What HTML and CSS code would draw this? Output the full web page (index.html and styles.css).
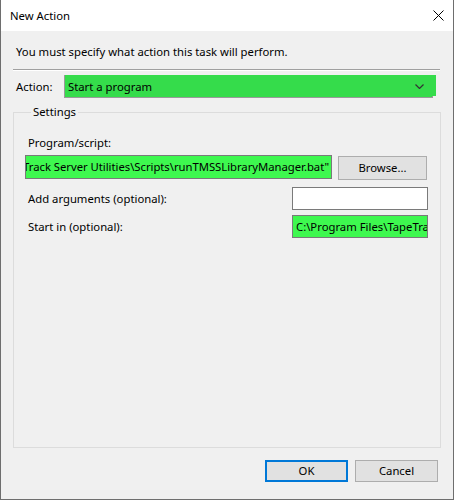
FILE: index.html
```html
<!DOCTYPE html>
<html>
<head>
<meta charset="utf-8">
<link rel="stylesheet" href="styles.css">
</head>
<body>
<div class="window">
  <div class="titlebar">
    <span class="title">New Action</span>
    <svg class="close" width="11" height="11" viewBox="0 0 11 11"><path d="M0.5 0.5 L10.5 10.5 M10.5 0.5 L0.5 10.5" stroke="#000" stroke-width="1" fill="none"/></svg>
  </div>
  <div class="content">
    <div class="intro">You must specify what action this task will perform.</div>
    <div class="separator"></div>
    <div class="action-row">
      <span class="action-label">Action:</span>
      <div class="combo">
        <span class="combo-text">Start a program</span>
        <svg class="chevron" width="9" height="5" viewBox="0 0 9 5"><path d="M0.5 0.5 L4.5 4.5 L8.5 0.5" stroke="#333" stroke-width="1.2" fill="none"/></svg>
      </div>
    </div>
    <fieldset class="settings">
      <legend>Settings</legend>
      <div class="label">Program/script:</div>
      <div class="program-row">
        <div class="field green wide"><span>Track Server Utilities\Scripts\runTMSSLibraryManager.bat"</span></div>
        <div class="button browse">Browse...</div>
      </div>
      <div class="opt-row first">
        <span class="label">Add arguments (optional):</span>
        <div class="field small"></div>
      </div>
      <div class="opt-row second">
        <span class="label">Start in (optional):</span>
        <div class="field small green left"><span>C:\Program Files\TapeTra</span></div>
      </div>
    </fieldset>
    <div class="buttons">
      <div class="button ok">OK</div>
      <div class="button">Cancel</div>
    </div>
  </div>
</div>
</body>
</html>
```

FILE: styles.css
```css
html, body {
  margin: 0;
  padding: 0;
  background: #f0f0f0;
}
body {
  font-family: "Noto Sans", "Open Sans", sans-serif;
  font-size: 11.3px;
  line-height: 16px;
  color: #000;
}
.window {
  width: 454px;
  height: 500px;
  box-sizing: border-box;
  border: 1px solid #6e6e6e;
  border-top: none;
  display: flex;
  flex-direction: column;
  background: #f0f0f0;
}
.titlebar {
  height: 31px;
  background: #fff;
  display: flex;
  align-items: center;
  padding-left: 9px;
  padding-right: 9px;
  flex: none;
}
.title {
  flex: 1;
  padding-top: 1px;
}
.close {
  display: block;
}
.content {
  flex: 1;
  display: flex;
  flex-direction: column;
  padding: 0 12px;
}
.intro {
  margin-top: 13px;
  padding-left: 3px;
}
.separator {
  margin-top: 9px;
  height: 1px;
  background: #a0a0a0;
  border-bottom: 1px solid #fff;
  margin-right: 1px;
}
.action-row {
  margin-top: 4px;
  display: flex;
  align-items: center;
  height: 23px;
}
.action-label {
  padding-left: 3px;
  width: 48px;
}
.combo {
  position: relative;
  width: 369px;
  height: 23px;
  box-sizing: border-box;
  border: 1px solid #9a9a9a;
  background: #35dc4b;
  display: flex;
  align-items: center;
  padding-left: 3px;
}
.combo::before {
  content: "";
  position: absolute;
  left: 0;
  top: -1px;
  right: -4px;
  bottom: 1px;
  background: #35dc4b;
}
.combo-text {
  position: relative;
  flex: 1;
}
.chevron {
  position: relative;
  display: block;
  margin-right: 8px;
  margin-bottom: 1px;
}
.settings {
  flex: 1;
  margin: 6px 0 0 0;
  border: 1px solid #dcdcdc;
  padding: 15px 12px 0 11px;
  min-width: 0;
}
.settings legend {
  padding: 0 2px;
  margin-left: 6px;
  line-height: 16px;
}
.label {
  padding-left: 3px;
}
.program-row {
  margin-top: 4px;
  display: flex;
  align-items: flex-start;
  justify-content: space-between;
}
.field {
  box-sizing: border-box;
  border: 1px solid #7a7a7a;
  background: #fff;
  height: 23px;
  overflow: hidden;
  display: flex;
  align-items: center;
  white-space: nowrap;
}
.field.green {
  background: #3ef84f;
}
.field.wide {
  width: 307px;
  height: 24px;
  justify-content: flex-end;
  padding-right: 2px;
}
.field.wide span {
  flex: none;
  letter-spacing: -0.03px;
}
.field.small {
  width: 136px;
}
.field.left {
  padding-left: 3px;
}
.field.left span {
  flex: none;
}
.button {
  box-sizing: border-box;
  border: 1px solid #adadad;
  background: #e1e1e1;
  display: flex;
  align-items: center;
  justify-content: center;
  width: 83px;
  height: 22px;
}
.browse {
  width: 89px;
  height: 24px;
  margin-top: 1px;
  margin-right: 1px;
}
.opt-row {
  display: flex;
  align-items: center;
  justify-content: space-between;
}
.opt-row.first {
  margin-top: 7px;
}
.opt-row.second {
  margin-top: 5px;
}
.buttons {
  display: flex;
  justify-content: flex-end;
  gap: 7px;
  margin-top: 12px;
  margin-bottom: 17px;
  padding-right: 3px;
}
.button.ok {
  border: 2px solid #0078d7;
}
```
